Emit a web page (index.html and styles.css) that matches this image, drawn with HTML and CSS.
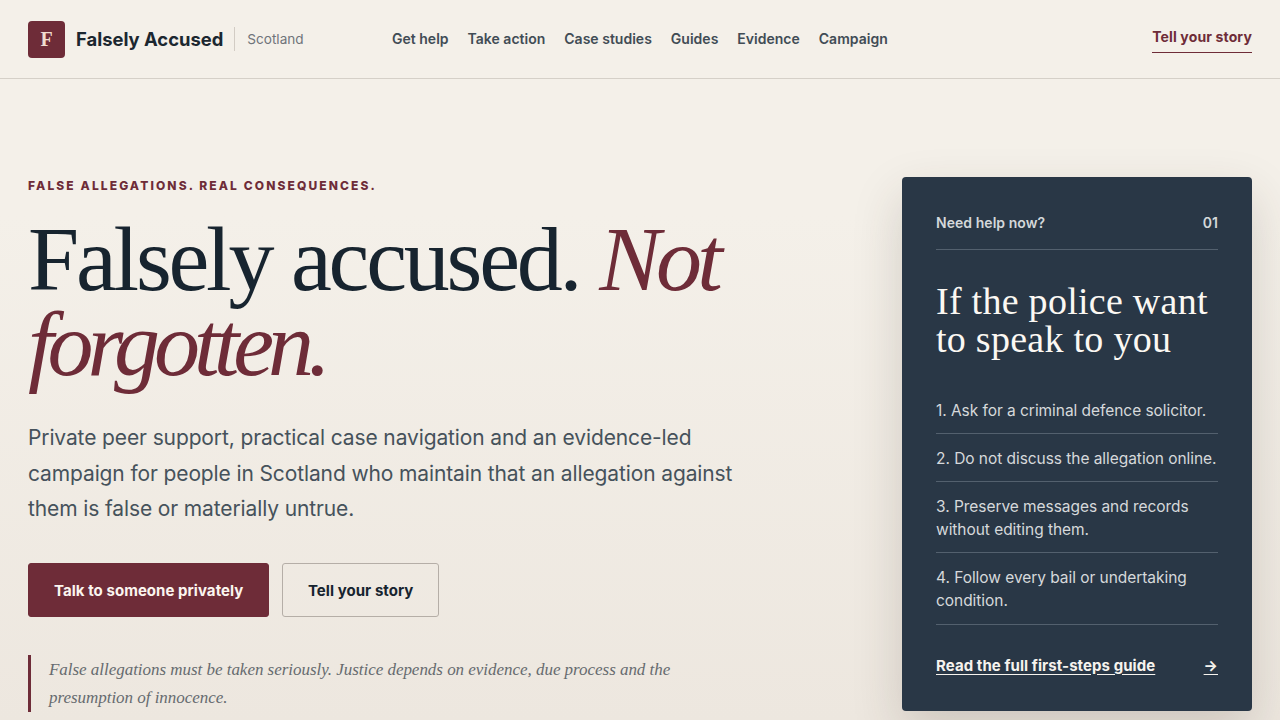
FILE: index.html
```html
<!DOCTYPE html>
<html lang="en">
<head>
<meta charset="utf-8">
<title>Falsely Accused Scotland</title>
<link rel="stylesheet" href="styles.css">
</head>
<body>
<header class="site-header">
  <a class="brand" href="#">
    <span class="brand-mark">F</span>
    <span class="brand-name">Falsely Accused</span>
    <span class="brand-region">Scotland</span>
  </a>
  <nav class="main-nav">
    <a href="#">Get help</a>
    <a href="#">Take action</a>
    <a href="#">Case studies</a>
    <a href="#">Guides</a>
    <a href="#">Evidence</a>
    <a href="#">Campaign</a>
  </nav>
  <a class="header-cta" href="#">Tell your story</a>
</header>
<main class="hero">
  <section class="hero-copy">
    <p class="eyebrow">FALSE ALLEGATIONS. REAL CONSEQUENCES.</p>
    <h1>Falsely accused. <em class="em-not">Not</em> <em class="em-forgotten">forgotten.</em></h1>
    <p class="lede">Private peer support, practical case navigation and an evidence-led campaign for people in Scotland who maintain that an allegation against them is false or materially untrue.</p>
    <div class="actions">
      <a class="btn btn-primary" href="#">Talk to someone privately</a>
      <a class="btn btn-secondary" href="#">Tell your story</a>
    </div>
    <blockquote class="quote">False allegations must be taken seriously. Justice depends on evidence, due process and the presumption of innocence.</blockquote>
  </section>
  <aside class="help-card">
    <div class="card-top"><span>Need help now?</span><span>01</span></div>
    <h2>If the police want to speak to you</h2>
    <ol class="steps">
      <li>1. Ask for a criminal defence solicitor.</li>
      <li>2. Do not discuss the allegation online.</li>
      <li>3. Preserve messages and records without editing them.</li>
      <li>4. Follow every bail or undertaking condition.</li>
    </ol>
    <a class="card-link" href="#"><span class="card-link-text">Read the full first-steps guide</span><span class="card-arrow">→</span></a>
  </aside>
</main>
</body>
</html>
```
FILE: styles.css
```css
* { box-sizing: border-box; }
html, body { margin: 0; height: 720px; overflow: hidden; }
body {
  font-family: Inter, "Liberation Sans", sans-serif;
  color: #17242f;
  background: linear-gradient(180deg, #f4f0e9 0%, #f4f0e9 30%, #ede7df 100%);
}
a { color: inherit; text-decoration: none; }
.site-header {
  height: 79px;
  display: flex;
  align-items: center;
  padding: 0 28px;
  border-bottom: 1px solid #d5d0c8;
  background: #f4f0e9;
}
.brand { display: flex; align-items: center; width: 364px; flex: none; }
.brand-mark {
  width: 37px; height: 37px;
  display: flex; align-items: center; justify-content: center;
  background: #6e2c38; color: #f0dccf;
  border-radius: 4px;
  font: 700 20px "Liberation Serif", serif;
}
.brand-name { margin-left: 11px; font-size: 18.4px; font-weight: 700; color: #1b2730; }
.brand-region {
  margin-left: 11px; padding-left: 12px;
  border-left: 1px solid #d2ccc4;
  line-height: 24px;
  font-size: 13.6px; color: #6f747a;
}
.main-nav { display: flex; gap: 19px; padding-bottom: 1px; font-size: 14px; font-weight: 600; letter-spacing: 0.01px; color: #414c55; }
.header-cta {
  margin-left: auto;
  font-size: 14px; line-height: 20px; font-weight: 700; letter-spacing: 0.01em; color: #6e2c38;
  padding: 1px 0 5px;
  border-bottom: 1px solid #6e2c38;
}
.hero {
  display: grid;
  grid-template-columns: 1fr 350px;
  column-gap: 100px;
  padding: 98px 28px 0;
}
.eyebrow {
  margin: 1px 0 0;
  font-size: 12px; line-height: 16px; font-weight: 800;
  letter-spacing: 2.12px; color: #6e2c38;
}
h1 {
  margin: 23px 0 0;
  font: 400 92px/85px "Liberation Serif", serif;
  letter-spacing: -0.035em;
  color: #17242f;
}
h1 em { color: #6e2c38; font-style: italic; }
.em-not { letter-spacing: -0.05em; }
.em-forgotten { letter-spacing: -0.065em; }
.lede {
  margin: 33px 0 0;
  max-width: 720px;
  font-size: 21px; line-height: 35.7px; letter-spacing: -0.12px; color: #46525b;
}
.actions { display: flex; gap: 12.6px; margin-top: 36px; }
.btn {
  height: 54px; display: flex; align-items: center; padding: 1px 25px 0;
  font-size: 15px; font-weight: 700; letter-spacing: 0.05px; border-radius: 3px;
}
.btn-primary { background: #6e2c38; color: #fbf5ef; border: 1px solid #6e2c38; }
.btn-secondary { padding-left: 25px; padding-right: 24.6px; border: 1px solid #b5aea7; color: #17242f; }
.quote {
  margin: 38px 0 0;
  max-width: 680px;
  padding: 1px 0 0 18px;
  border-left: 3px solid #6e2c38;
  font: italic 17px/28px "Liberation Serif", serif;
  letter-spacing: -0.03px;
  color: #666b6f;
}
.help-card {
  height: 534px;
  padding: 34px;
  background: #293746;
  color: #e7e6e3;
  border-radius: 4px;
  box-shadow: 0 20px 50px rgba(60, 50, 40, 0.18);
  display: flex; flex-direction: column;
}
.card-top {
  display: flex; justify-content: space-between;
  font-size: 14px; font-weight: 600; letter-spacing: 0.05px; color: #d4d8da;
  line-height: 24px;
  padding-bottom: 14px;
  border-bottom: 1px solid #53606e;
}
h2 {
  margin: 32px 0 0;
  font: 400 38px/38px "Liberation Serif", serif;
  letter-spacing: 0.27px;
  color: #fbf8f3;
}
.steps { list-style: none; margin: 28px 0 0; padding: 0; font-size: 15.5px; line-height: 23.1px; letter-spacing: -0.05px; color: #d6d9db; }
.steps li { padding: 12.6px 0 11.4px; border-bottom: 1px solid #53606e; }
.card-link {
  display: flex; justify-content: space-between; align-items: center;
  margin-top: 31px;
  font-size: 15px; font-weight: 700; letter-spacing: 0.07px; color: #f6f3ee;
}
.card-link-text { text-decoration: underline; text-underline-offset: 3px; }
.card-arrow { text-decoration: underline; text-underline-offset: 3px; }
```
